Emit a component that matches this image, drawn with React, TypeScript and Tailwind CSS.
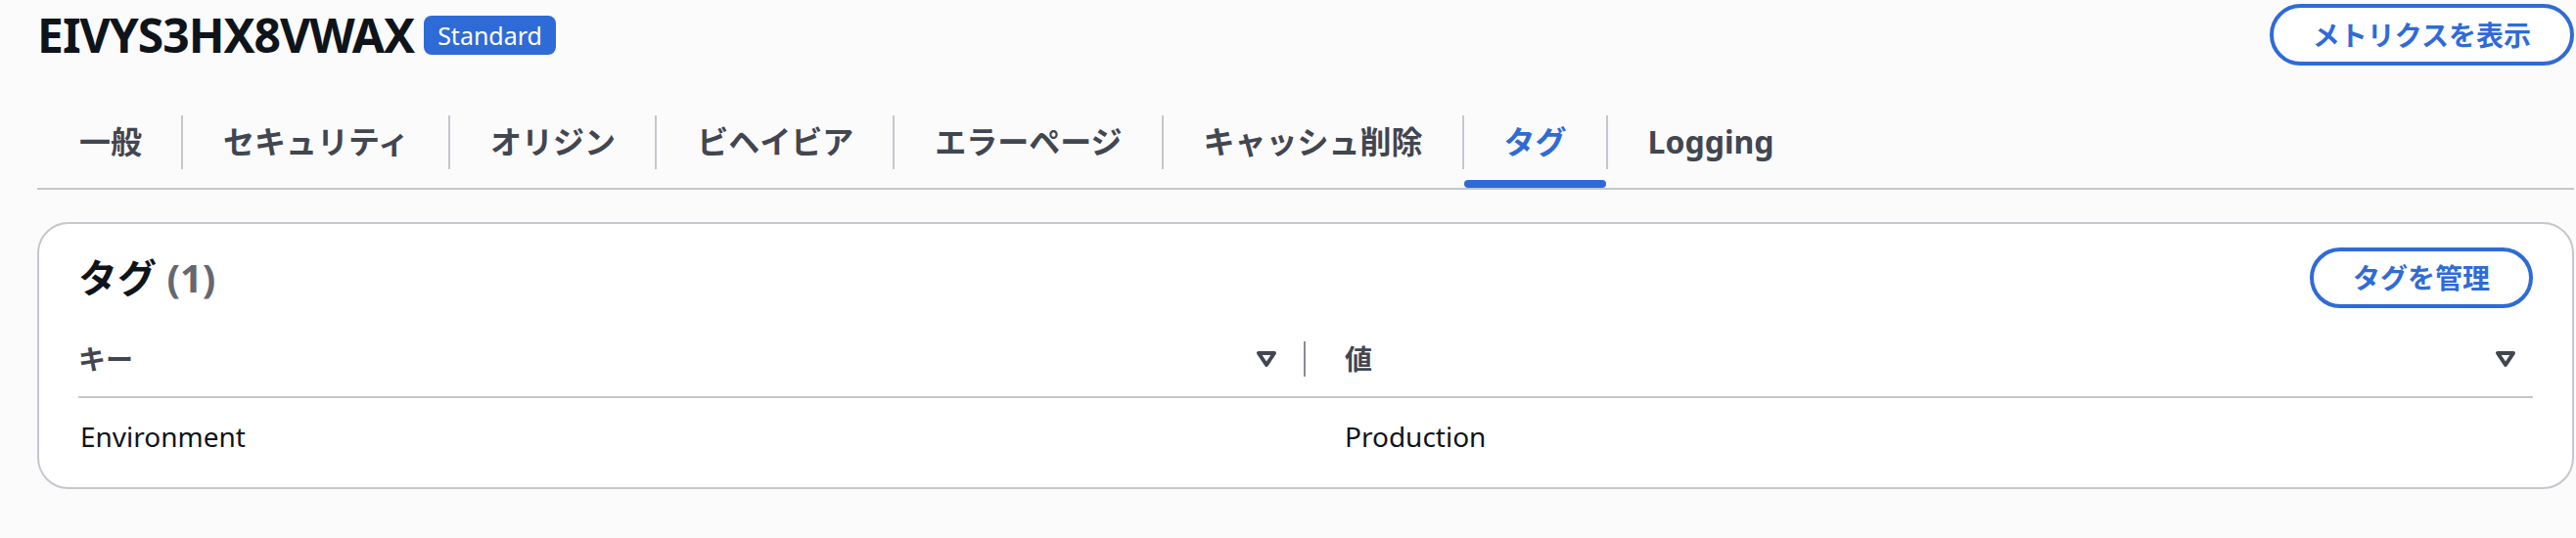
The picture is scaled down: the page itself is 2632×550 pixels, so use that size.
import { useState } from "react";

const tabs = [
  "一般",
  "セキュリティ",
  "オリジン",
  "ビヘイビア",
  "エラーページ",
  "キャッシュ削除",
  "タグ",
  "Logging",
];

function Caret() {
  return (
    <svg width="32" height="32" viewBox="0 0 16 16" className="shrink-0">
      <path
        d="M4 5h8l-4 6-4-6z"
        fill="none"
        stroke="#424650"
        strokeWidth="2"
        strokeLinejoin="round"
      />
    </svg>
  );
}

export default function App() {
  const [active, setActive] = useState("タグ");

  return (
    <div
      className="w-[2632px] h-[550px] bg-[#fbfbfc] pl-[38px] pr-[2px] text-[#0f141a] overflow-hidden"
      style={{ fontFamily: '"Noto Sans", "Noto Sans CJK JP", sans-serif' }}
    >
      {/* Header */}
      <div className="flex items-center h-[71px]">
        <h1 className="text-[48px] leading-[56px] font-bold tracking-[-1px]">EIVYS3HX8VWAX</h1>
        <span className="ml-[10px] h-[40px] px-[14px] rounded-[8px] bg-[#2f6bd6] text-white text-[25px] leading-[40px]">
          Standard
        </span>
        <div className="flex-1" />
        <button className="h-[63px] px-[40px] rounded-full border-[4px] border-[#2f6bd6] bg-white text-[#2f6bd6] text-[28px] leading-[36px] font-bold">
          メトリクスを表示
        </button>
      </div>

      {/* Tabs */}
      <div className="mt-[27px] flex h-[96px] pl-[2px] border-b-2 border-[#c6c6cd]">
        {tabs.map((t, i) => (
          <div key={t} className="flex items-center">
            {i > 0 && <div className="w-[2px] h-[55px] bg-[#c6c6cd]" />}
            <button
              onClick={() => setActive(t)}
              className={
                "relative h-full flex items-center pl-[41px] pr-[40px] text-[32px] leading-[40px] font-bold " +
                (active === t ? "text-[#2f6bd6]" : "text-[#424650]")
              }
            >
              {t}
              {active === t && (
                <span className="absolute left-0 right-0 bottom-0 h-[8px] rounded-full bg-[#2f6bd6]" />
              )}
            </button>
          </div>
        ))}
      </div>

      {/* Tags card */}
      <div className="mt-[33px] bg-white border-2 border-[#c6c6cd] rounded-[32px] px-[40px] pt-[24px] pb-[13px]">
        <div className="flex items-center justify-between h-[62px]">
          <h2 className="text-[40px] leading-[48px] font-bold">
            タグ <span className="text-[#656871]">(1)</span>
          </h2>
          <button className="h-[62px] px-[40px] rounded-full border-[4px] border-[#2f6bd6] bg-white text-[#2f6bd6] text-[28px] leading-[36px] font-bold">
            タグを管理
          </button>
        </div>

        <div className="mt-[14px] grid grid-cols-2 h-[78px] border-b-2 border-[#c6c6cd] text-[28px] leading-[40px] font-bold text-[#424650]">
          <div className="flex items-center">
            <span className="flex-1">キー</span>
            <Caret />
            <div className="ml-[22px] w-[2px] h-[36px] bg-[#8c8c94]" />
          </div>
          <div className="flex items-center pl-[40px]">
            <span className="flex-1">値</span>
            <Caret />
            <div className="w-[12px]" />
          </div>
        </div>

        <div className="grid grid-cols-2 pt-[19px] pb-[19px] text-[28px] leading-[40px]">
          <div className="pl-[2px]">Environment</div>
          <div className="pl-[40px]">Production</div>
        </div>
      </div>
    </div>
  );
}
